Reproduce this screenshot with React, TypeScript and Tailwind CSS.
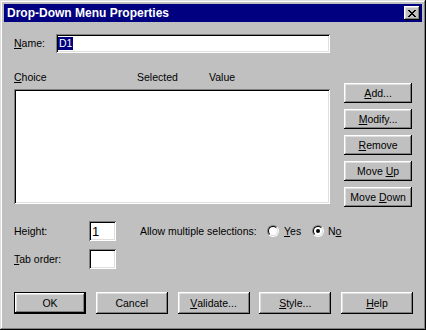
import React from 'react';

const raised =
  'shadow-[inset_-1px_-1px_#000,inset_1px_1px_#fff,inset_-2px_-2px_#808080,inset_2px_2px_#dfdfdf]';
const sunken =
  'shadow-[inset_1px_1px_#808080,inset_-1px_-1px_#fff,inset_2px_2px_#000,inset_-2px_-2px_#dfdfdf]';

// Underlined mnemonic letter
const K = ({ c }: { c: string }) => <span className="underline underline-offset-[1px]">{c}</span>;

const Button = ({ children, className = '' }: { children: React.ReactNode; className?: string }) => (
  <div className={`bg-[#c0c0c0] flex items-center justify-center ${raised} ${className}`}>
    {children}
  </div>
);

const Radio = ({ checked }: { checked?: boolean }) => (
  <div className="w-[12px] h-[12px] rounded-full border border-t-[#808080] border-l-[#808080] border-r-white border-b-white">
    <div className="w-full h-full rounded-full bg-white border border-t-black border-l-black border-r-[#dfdfdf] border-b-[#dfdfdf] flex items-center justify-center">
      {checked && <div className="w-[4px] h-[4px] rounded-full bg-black" />}
    </div>
  </div>
);

const Field = ({ className = '', children }: { className?: string; children?: React.ReactNode }) => (
  <div className={`bg-white ${sunken} ${className}`}>{children}</div>
);

export default function App() {
  return (
    <div
      className={`w-[426px] h-[330px] bg-[#c0c0c0] p-[4px] flex flex-col text-black text-[10.5px] leading-[13px] font-['Liberation_Sans',Arial,sans-serif] shadow-[inset_-1px_-1px_#000,inset_1px_1px_#dfdfdf,inset_-2px_-2px_#808080,inset_2px_2px_#fff]`}
    >
      {/* title bar */}
      <div className="h-[18px] bg-[#000080] flex items-center justify-between pl-[3px] pr-[2px]">
        <span className="text-white font-bold text-[12px] leading-none">Drop-Down Menu Properties</span>
        <Button className="w-[16px] h-[14px]">
          <svg width="8" height="7" viewBox="0 0 8 7" shapeRendering="crispEdges">
            <path d="M0 0h2v1h-2zM6 0h2v1h-2zM1 1h2v1h-2zM5 1h2v1h-2zM2 2h4v1h-4zM3 3h2v1h-2zM2 4h4v1h-4zM1 5h2v1h-2zM5 5h2v1h-2zM0 6h2v1h-2zM6 6h2v1h-2z" fill="#000" />
          </svg>
        </Button>
      </div>

      <div className="px-[10px]">
        {/* name */}
        <div className="mt-[12px] flex items-center h-[19px]">
          <div className="w-[42px]">
            <K c="N" />ame:
          </div>
          <Field className="w-[274px] h-[19px] flex items-center pl-[2px]">
            <span className="bg-[#000080] text-white px-[1px]">D1</span>
          </Field>
        </div>

        {/* list + side buttons */}
        <div className="mt-[18px] flex">
          <div className="w-[317px]">
            <div className="flex h-[13px]">
              <div className="w-[123px]">
                <K c="C" />hoice
              </div>
              <div className="w-[72px]">Selected</div>
              <div>Value</div>
            </div>
            <Field className="mt-[5px] h-[115px] w-full" />
          </div>
          <div className="ml-[14px] w-[68px] pt-[12px] flex flex-col gap-[6px]">
            <Button className="h-[20px]">
              <K c="A" />dd...
            </Button>
            <Button className="h-[20px]">
              <K c="M" />odify...
            </Button>
            <Button className="h-[20px]">
              <K c="R" />emove
            </Button>
            <Button className="h-[20px]">
              Move&nbsp;<K c="U" />p
            </Button>
            <Button className="h-[20px]">
              Move&nbsp;<K c="D" />own
            </Button>
          </div>
        </div>

        {/* height */}
        <div className="mt-[14px] flex items-center h-[20px]">
          <div className="w-[75px]">
            Hei<K c="g" />ht:
          </div>
          <Field className="w-[27px] h-[20px] flex items-center pl-[3px] text-[13px]">1</Field>
          <div className="ml-[24px] w-[127px]">Allow multiple selections:</div>
          <div className="w-[45px] flex items-center">
            <Radio />
            <span className="ml-[5px]">
              <K c="Y" />es
            </span>
          </div>
          <div className="flex items-center">
            <Radio checked />
            <span className="ml-[4px]">
              N<K c="o" />
            </span>
          </div>
        </div>

        {/* tab order */}
        <div className="mt-[8px] flex items-center h-[20px]">
          <div className="w-[75px]">
            <K c="T" />ab order:
          </div>
          <Field className="w-[27px] h-[20px]" />
        </div>

        {/* bottom buttons */}
        <div className="mt-[23px] w-[399px] flex justify-between">
          <div className="border border-black w-[72px] h-[22px] flex">
            <Button className="flex-1">OK</Button>
          </div>
          <Button className="w-[72px] h-[22px]">Cancel</Button>
          <Button className="w-[72px] h-[22px]">
            <K c="V" />alidate...
          </Button>
          <Button className="w-[72px] h-[22px]">
            <K c="S" />tyle...
          </Button>
          <Button className="w-[72px] h-[22px]">
            <K c="H" />elp
          </Button>
        </div>
      </div>
    </div>
  );
}
